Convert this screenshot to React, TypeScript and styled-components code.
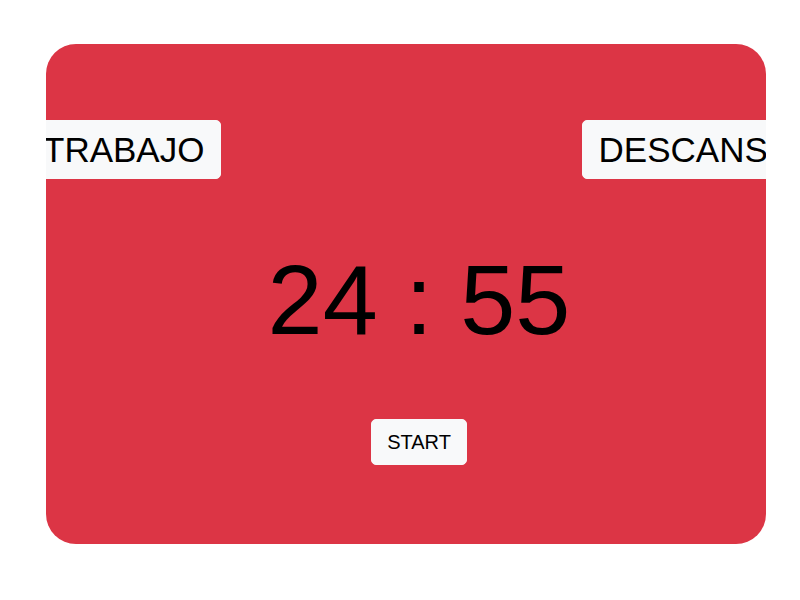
import React from "react";
import styled, { createGlobalStyle } from "styled-components";

const Global = createGlobalStyle`
  html, body { margin: 0; padding: 0; background: #ffffff; }
  body { font-family: "Liberation Sans", Arial, sans-serif; }
`;

const Page = styled.div`
  padding: 44px 0 0 46px;
`;

const Card = styled.div`
  width: 720px;
  height: 500px;
  background: #dc3545;
  border-radius: 30px;
  overflow: hidden;
  box-sizing: border-box;
  padding-top: 76px;
`;

const Inner = styled.div`
  width: 786px;
  margin-left: -20px;
  display: flex;
  flex-direction: column;
  align-items: center;
`;

const ModeRow = styled.div`
  width: 100%;
  display: flex;
  justify-content: space-between;
  align-items: center;
`;

const Button = styled.button<{ $size?: "lg" | "sm" }>`
  font-family: "Liberation Sans", Arial, sans-serif;
  color: #000;
  background: #f8f9fa;
  border: 1px solid #f8f9fa;
  border-radius: 5px;
  font-size: ${(p) => (p.$size === "lg" ? "35px" : "20px")};
  line-height: ${(p) => (p.$size === "lg" ? "51px" : "30px")};
  padding: ${(p) => (p.$size === "lg" ? "3px 16px" : "7px 15px")};
  white-space: nowrap;
  cursor: pointer;
  flex-shrink: 0;
`;

const Timer = styled.div`
  margin-top: 63px;
  font-size: 99px;
  line-height: 115px;
  color: #000;
  white-space: pre;
`;

const StartWrap = styled.div`
  margin-top: 62px;
`;

export default function App() {
  return (
    <>
      <Global />
      <Page>
        <Card>
          <Inner>
            <ModeRow>
              <Button $size="lg">TRABAJO</Button>
              <Button $size="lg">DESCANSO</Button>
            </ModeRow>
            <Timer>24 : 55</Timer>
            <StartWrap>
              <Button $size="sm">START</Button>
            </StartWrap>
          </Inner>
        </Card>
      </Page>
    </>
  );
}
